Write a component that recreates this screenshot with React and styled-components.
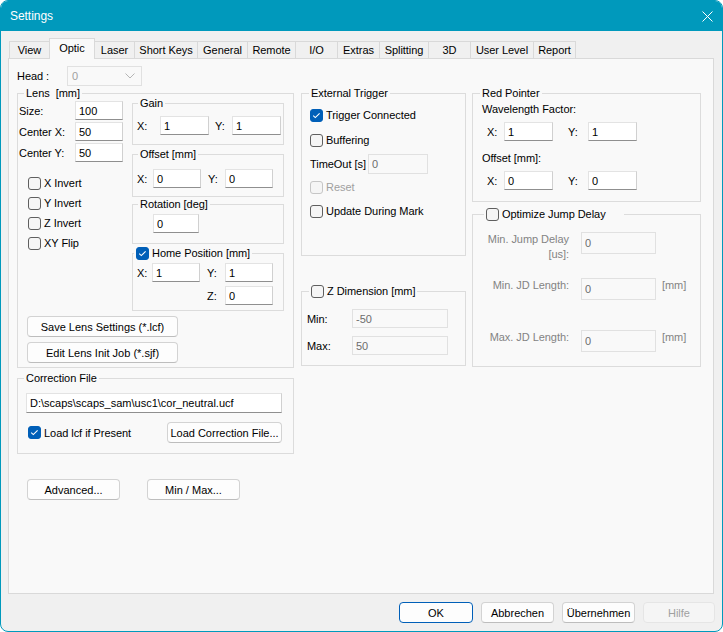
import React from 'react';
import styled, { createGlobalStyle } from 'styled-components';

const GlobalStyle = createGlobalStyle`
  * { box-sizing: border-box; }
  html, body { margin: 0; padding: 0; background: #ffffff; }
  body {
    font-family: "Liberation Sans", Arial, sans-serif;
    font-size: 11px;
    letter-spacing: -0.05px;
    color: #000;
  }
`;

const Window = styled.div`
  width: 723px;
  height: 632px;
  border: 1px solid #0099bc;
  border-radius: 8px;
  overflow: hidden;
  background: #f0f0f0;
  display: flex;
  flex-direction: column;
`;

const TitleBar = styled.div`
  height: 30px;
  flex: none;
  background: #0099bc;
  color: #fff;
  font-size: 12px;
  display: flex;
  align-items: center;
  justify-content: space-between;
  padding: 0 9px;
`;

const Body = styled.div`
  flex: 1;
  display: flex;
  flex-direction: column;
  padding: 7px 7px 0 7px;
`;

const TabStrip = styled.div`
  display: flex;
  align-items: flex-end;
  height: 20px;
  padding-left: 2px;
`;

const Tab = styled.div`
  width: ${(p) => p.$w}px;
  height: ${(p) => (p.$active ? 21 : 17)}px;
  margin: 0 0 ${(p) => (p.$active ? -1 : 0)}px -1px;
  padding-bottom: ${(p) => (p.$active ? 3 : 0)}px;
  border: 1px solid #d9d9d9;
  border-bottom: none;
  background: ${(p) => (p.$active ? '#f9f9f9' : '#f0f0f0')};
  position: relative;
  z-index: ${(p) => (p.$active ? 2 : 1)};
  display: flex;
  align-items: center;
  justify-content: center;
  white-space: nowrap;
`;

const Panel = styled.div`
  width: 706px;
  height: 536px;
  flex: none;
  border: 1px solid #d9d9d9;
  background: #f9f9f9;
  padding: 7px 0 0 8px;
  display: flex;
  align-items: flex-start;
`;

const Column = styled.div`
  width: ${(p) => p.$w}px;
  margin-left: ${(p) => p.$ml || 0}px;
  padding-top: ${(p) => p.$pt || 0}px;
  display: flex;
  flex-direction: column;
  flex: none;
`;

const Group = styled.div`
  border: 1px solid #dcdcdc;
  margin-top: ${(p) => p.$mt || 0}px;
  padding-bottom: ${(p) => p.$pb || 0}px;
`;

const Legend = styled.div`
  display: flex;
  align-items: center;
  width: fit-content;
  min-width: ${(p) => p.$min || 0}px;
  height: 14px;
  line-height: 14px;
  margin: -8px 0 0 ${(p) => p.$ml || 0}px;
  padding: 0 2px;
  background: #f9f9f9;
  white-space: nowrap;
`;

const Row = styled.div`
  display: flex;
  align-items: center;
  height: ${(p) => (p.$h ? `${p.$h}px` : 'auto')};
  margin-top: ${(p) => p.$mt || 0}px;
  padding-left: ${(p) => p.$pl || 0}px;
  padding-right: ${(p) => p.$pr || 0}px;
  justify-content: ${(p) => p.$justify || 'flex-start'};
  gap: ${(p) => p.$gap || 0}px;
`;

const Label = styled.span`
  width: ${(p) => (p.$w ? `${p.$w}px` : 'auto')};
  margin-left: ${(p) => p.$ml || 0}px;
  margin-right: ${(p) => p.$mr || 0}px;
  padding-left: ${(p) => p.$pl || 0}px;
  flex: none;
  line-height: 14px;
  white-space: nowrap;
  color: ${(p) => (p.$dim ? '#838383' : '#000')};
`;

const Field = styled.input.attrs({ type: 'text', readOnly: true })`
  width: ${(p) => p.$w}px;
  height: ${(p) => p.$h || 19}px;
  flex: none;
  margin: 0 0 0 ${(p) => p.$ml || 0}px;
  padding: 0 3px;
  font: inherit;
  color: #000;
  background: #fff;
  border: 1px solid #e3e3e3;
  border-right-color: #d0d0d0;
  border-bottom-color: #8f8f8f;
  border-radius: 0;
  outline: none;

  &:disabled {
    background: #f9f9f9;
    border-color: #e1e1e1;
    color: #6d6d6d;
  }
`;

const Combo = styled.div`
  width: 75px;
  height: 20px;
  border: 1px solid #e1e1e1;
  background: #f9f9f9;
  color: #a0a0a0;
  display: flex;
  align-items: center;
  justify-content: space-between;
  padding: 0 6px 0 4px;
`;

const Button = styled.button`
  width: ${(p) => p.$w}px;
  height: 21px;
  flex: none;
  padding: 0;
  font: inherit;
  color: #000;
  background: #fdfdfd;
  border: 1px solid #d3d3d3;
  border-bottom-color: #bdbdbd;
  border-color: ${(p) => (p.$primary ? '#005fb8' : undefined)};
  border-radius: 4px;

  &:disabled {
    background: #f5f5f5;
    color: #a0a0a0;
    border-color: #e5e5e5;
  }
`;

const CheckWrap = styled.label`
  display: flex;
  align-items: center;
  gap: 3px;
  height: 16px;
  white-space: nowrap;
  color: ${(p) => (p.$disabled ? '#a0a0a0' : '#000')};
`;

const Box = styled.span`
  width: 13px;
  height: 13px;
  flex: none;
  border-radius: 3px;
  border: 1px solid ${(p) => (p.$checked ? '#005fb8' : p.$disabled ? '#c6c6c6' : '#5f5f5f')};
  background: ${(p) => (p.$checked ? '#005fb8' : '#f5f5f5')};
  display: flex;
  align-items: center;
  justify-content: center;
`;

const Check = ({ checked, disabled, children }) => (
  <CheckWrap $disabled={disabled}>
    <Box $checked={checked} $disabled={disabled}>
      {checked && (
        <svg width="11" height="11" viewBox="0 0 11 11">
          <path d="M2.2 5.6 L4.3 7.6 L8.6 3.3" fill="none" stroke="#fff" strokeWidth="1.1" />
        </svg>
      )}
    </Box>
    <span>{children}</span>
  </CheckWrap>
);

const LensTop = styled.div`
  display: flex;
  gap: 8px;
`;

const LensLeft = styled.div`
  width: 106px;
  flex: none;
  display: flex;
  flex-direction: column;
`;

const FieldGrid = styled.div`
  display: grid;
  grid-template-columns: 56px 48px;
  grid-auto-rows: 19px;
  row-gap: 2px;
  align-items: center;
  margin-top: 1px;
  padding-left: 1px;
`;

const CheckList = styled.div`
  display: flex;
  flex-direction: column;
  gap: 4px;
  margin-top: 13px;
  padding-left: 10px;
`;

const LensRight = styled.div`
  width: 152px;
  flex: none;
  margin-top: 3px;
  display: flex;
  flex-direction: column;
`;

const HomeGrid = styled.div`
  display: grid;
  grid-template-columns: 15px 48px 25px 48px;
  grid-template-rows: 19px 19px;
  row-gap: 4px;
  align-items: center;
  margin-top: 3px;
  padding-left: 4px;
`;

const ButtonStack = styled.div`
  display: flex;
  flex-direction: column;
  gap: 5px;
  margin-top: 5px;
  padding-left: 9px;
`;

const JumpGrid = styled.div`
  display: grid;
  grid-template-columns: 98px 75px auto;
  grid-template-rows: 46px 52px 22px;
  column-gap: 6px;
  margin-top: 11px;
  padding-left: 4px;
`;

const JumpLabel = styled.span`
  text-align: right;
  padding-right: 6px;
  line-height: 15px;
  color: #838383;
`;

const Unit = styled.span`
  line-height: 15px;
  color: #838383;
`;

const Footer = styled.div`
  display: flex;
  justify-content: flex-end;
  gap: 8px;
  margin-top: 8px;
`;

const tabs = [
  ['View', 41], ['Optic', 46], ['Laser', 41], ['Short Keys', 64], ['General', 51],
  ['Remote', 49], ['I/O', 43], ['Extras', 43], ['Splitting', 50], ['3D', 43],
  ['User Level', 64], ['Report', 43],
];

const App = () => {
  return (
    <React.Fragment>
      <GlobalStyle />
      <Window>
        <TitleBar>
          <span>Settings</span>
          <svg width="11" height="11" viewBox="0 0 11 11">
            <path d="M0.5 0.5 L10.5 10.5 M10.5 0.5 L0.5 10.5" stroke="#fff" strokeWidth="1" />
          </svg>
        </TitleBar>
        <Body>
          <TabStrip>
            {tabs.map(([name, w]) => (
              <Tab key={name} $w={w} $active={name === 'Optic'}>{name}</Tab>
            ))}
          </TabStrip>
          <Panel>
            <Column $w={277}>
              <Row $h={20}>
                <Label $w={50}>Head :</Label>
                <Combo>
                  <span>0</span>
                  <svg width="10" height="6" viewBox="0 0 10 6">
                    <path d="M0.5 0.5 L5 5 L9.5 0.5" fill="none" stroke="#b5b5b5" strokeWidth="1" />
                  </svg>
                </Combo>
              </Row>

              <Group $mt={7} $pb={4}>
                <Legend $ml={6}>Lens&nbsp;&nbsp;[mm]</Legend>
                <LensTop>
                  <LensLeft>
                    <FieldGrid>
                      <Label>Size:</Label>
                      <Field $w={48} defaultValue="100" />
                      <Label>Center X:</Label>
                      <Field $w={48} defaultValue="50" />
                      <Label>Center Y:</Label>
                      <Field $w={48} defaultValue="50" />
                    </FieldGrid>
                    <CheckList>
                      <Check>X Invert</Check>
                      <Check>Y Invert</Check>
                      <Check>Z Invert</Check>
                      <Check>XY Flip</Check>
                    </CheckList>
                  </LensLeft>
                  <LensRight>
                    <Group $pb={9}>
                      <Legend $ml={5}>Gain</Legend>
                      <Row $mt={6} $pl={4}>
                        <Label $w={23}>X:</Label>
                        <Field $w={49} defaultValue="1" />
                        <Label $w={17} $ml={6}>Y:</Label>
                        <Field $w={49} defaultValue="1" />
                      </Row>
                    </Group>
                    <Group $mt={9} $pb={8}>
                      <Legend $ml={5}>Offset [mm]</Legend>
                      <Row $mt={8} $pl={4}>
                        <Label $w={16}>X:</Label>
                        <Field $w={48} defaultValue="0" />
                        <Label $w={17} $ml={7}>Y:</Label>
                        <Field $w={48} defaultValue="0" />
                      </Row>
                    </Group>
                    <Group $mt={7} $pb={10}>
                      <Legend $ml={5}>Rotation [deg]</Legend>
                      <Row $mt={3} $pl={20}>
                        <Field $w={46} defaultValue="0" />
                      </Row>
                    </Group>
                    <Group $mt={9} $pb={5}>
                      <Legend $ml={1}>
                        <Check checked>Home Position [mm]</Check>
                      </Legend>
                      <HomeGrid>
                        <Label>X:</Label>
                        <Field $w={48} defaultValue="1" />
                        <Label $pl={7}>Y:</Label>
                        <Field $w={48} defaultValue="1" />
                        <span />
                        <span />
                        <Label $pl={7}>Z:</Label>
                        <Field $w={48} defaultValue="0" />
                      </HomeGrid>
                    </Group>
                  </LensRight>
                </LensTop>
                <ButtonStack>
                  <Button $w={151}>Save Lens Settings (*.lcf)</Button>
                  <Button $w={151}>Edit Lens Init Job (*.sjf)</Button>
                </ButtonStack>
              </Group>

              <Group $mt={10} $pb={10}>
                <Legend $ml={6}>Correction File</Legend>
                <Row $mt={8} $pl={8}>
                  <Field $w={256} $h={20} defaultValue="D:\scaps\scaps_sam\usc1\cor_neutral.ucf" />
                </Row>
                <Row $mt={9} $pl={10} $pr={11} $justify="space-between">
                  <Check checked>Load lcf if Present</Check>
                  <Button $w={115}>Load Correction File...</Button>
                </Row>
              </Group>

              <Row $mt={25} $pl={10} $gap={27}>
                <Button $w={93}>Advanced...</Button>
                <Button $w={93}>Min / Max...</Button>
              </Row>
            </Column>

            <Column $w={165} $ml={7} $pt={27}>
              <Group $pb={36}>
                <Legend $ml={7}>External Trigger</Legend>
                <Row $mt={7} $pl={8}>
                  <Check checked>Trigger Connected</Check>
                </Row>
                <Row $mt={9} $pl={8}>
                  <Check>Buffering</Check>
                </Row>
                <Row $mt={6} $pl={8} $h={20}>
                  <Label $mr={2}>TimeOut [s]</Label>
                  <Field $w={60} $h={20} disabled defaultValue="0" />
                </Row>
                <Row $mt={5} $pl={8}>
                  <Check disabled>Reset</Check>
                </Row>
                <Row $mt={8} $pl={8}>
                  <Check>Update During Mark</Check>
                </Row>
              </Group>

              <Group $mt={35} $pb={10}>
                <Legend $ml={7}>
                  <Check>Z Dimension [mm]</Check>
                </Legend>
                <Row $mt={11} $pl={5}>
                  <Label $w={45}>Min:</Label>
                  <Field $w={96} disabled defaultValue="-50" />
                </Row>
                <Row $mt={8} $pl={5}>
                  <Label $w={45}>Max:</Label>
                  <Field $w={96} disabled defaultValue="50" />
                </Row>
              </Group>
            </Column>

            <Column $w={229} $ml={6} $pt={27}>
              <Group $pb={11}>
                <Legend $ml={7}>Red Pointer</Legend>
                <Row $mt={2} $pl={9} $h={14}>
                  <Label>Wavelength Factor:</Label>
                </Row>
                <Row $mt={6} $pl={14}>
                  <Label $w={17}>X:</Label>
                  <Field $w={49} defaultValue="1" />
                  <Label $w={20} $ml={15}>Y:</Label>
                  <Field $w={49} defaultValue="1" />
                </Row>
                <Row $mt={10} $pl={9} $h={14}>
                  <Label>Offset [mm]:</Label>
                </Row>
                <Row $mt={6} $pl={14}>
                  <Label $w={17}>X:</Label>
                  <Field $w={49} defaultValue="0" />
                  <Label $w={20} $ml={15}>Y:</Label>
                  <Field $w={49} defaultValue="0" />
                </Row>
              </Group>

              <Group $mt={12} $pb={14}>
                <Legend $ml={11} $min={140}>
                  <Check>Optimize Jump Delay</Check>
                </Legend>
                <JumpGrid>
                  <JumpLabel>Min. Jump Delay<br />[us]:</JumpLabel>
                  <Field $w={75} $h={22} disabled defaultValue="0" />
                  <span />
                  <JumpLabel>Min. JD Length:</JumpLabel>
                  <Field $w={75} $h={22} disabled defaultValue="0" />
                  <Unit>[mm]</Unit>
                  <JumpLabel>Max. JD Length:</JumpLabel>
                  <Field $w={75} $h={22} disabled defaultValue="0" />
                  <Unit>[mm]</Unit>
                </JumpGrid>
              </Group>
            </Column>
          </Panel>

          <Footer>
            <Button $w={74} $primary>OK</Button>
            <Button $w={73}>Abbrechen</Button>
            <Button $w={73}>Übernehmen</Button>
            <Button $w={72} disabled>Hilfe</Button>
          </Footer>
        </Body>
      </Window>
    </React.Fragment>
  );
};

export default App;
